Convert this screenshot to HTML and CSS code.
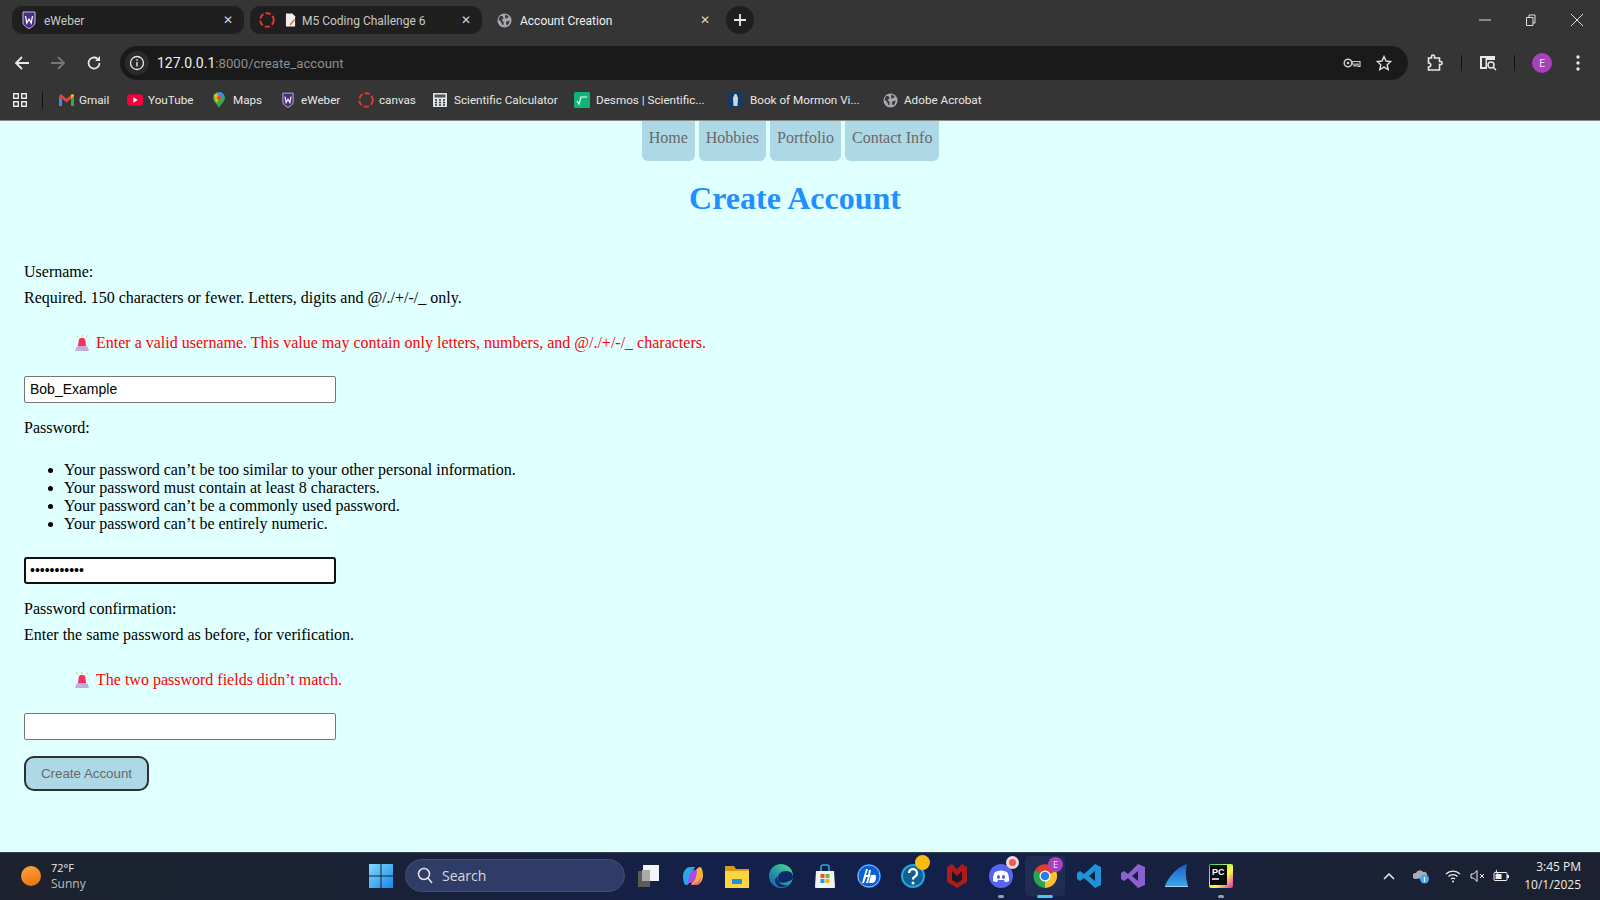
FILE: index.html
```html
<!DOCTYPE html>
<html lang="en">
<head>
<meta charset="utf-8">
<title>Account Creation</title>
<link rel="stylesheet" href="styles.css">
</head>
<body>
<svg class="defs" width="0" height="0" aria-hidden="true">
  <defs>
    <symbol id="weber" viewBox="0 0 14 18"><path d="M1 1h12v10c0 3-2.500 5-6 6.500C3.500 16 1 14 1 11z" fill="#4b2e83" stroke="#c9c2d8" stroke-width="1"/><path d="M3.500 5l1.300 7L7 8l2.200 4 1.300-7" fill="none" stroke="#fff" stroke-width="1.300"/></symbol>
    <symbol id="canvas" viewBox="0 0 16 16"><circle cx="8" cy="8" r="6.800" fill="none" stroke="#e03a30" stroke-width="2" stroke-dasharray="5.300 2.300"/></symbol>
    <symbol id="globe" viewBox="0 0 16 16"><circle cx="8" cy="8" r="7.500" fill="#a5a8ad"/><path d="M3.500 3l2.500.5 1 2-2 2 2 2v3l-1 .5-2-4-2.500-2zM9 1.500l3.500 2-2 2.500-2-1zM10 9l3.500-1-1 3.500-2 2-1-3z" fill="#3a3a3a"/></symbol>
    <symbol id="alarm" viewBox="0 0 16 16"><path d="M8 0v2M2.500 .5l1.500 2.500M13.500 .5L12 3" stroke="#f1c25a" stroke-width="1"/><path d="M3.800 11.500l1-6.500c.3-1.500 1.200-2 3.200-2s2.900.5 3.200 2l1 6.500z" fill="#f4345f"/><path d="M2.500 11.500h11l1.500 4.500H1z" fill="#c0aedf"/></symbol>
  </defs>
</svg>
<div class="screen">
  <header class="chrome">
    <div class="tabstrip">
      <div class="tab tab-first dark"><svg class="ico" width="14" height="18"><use href="#weber"/></svg><span class="tab-title">eWeber</span><span class="x">✕</span></div>
      <div class="tab tab-second dark"><svg class="ico" width="16" height="16"><use href="#canvas"/></svg><svg class="ico doc" width="11" height="14" viewBox="0 0 12 14"><path d="M1 0h7l3 3v11H1z" fill="#eee"/><path d="M5 12l5-6 1 1-5 6z" fill="#e4683a"/></svg><span class="tab-title">M5 Coding Challenge 6</span><span class="x">✕</span></div>
      <div class="tab tab-third"><svg class="ico" width="15" height="15"><use href="#globe"/></svg><span class="tab-title bright">Account Creation</span><span class="x bright">✕</span></div>
      <div class="newtab"><svg width="14" height="14" viewBox="0 0 14 14"><path d="M7 1v12M1 7h12" stroke="#e8e8e8" stroke-width="1.800"/></svg></div>
      <div class="winctl">
        <svg width="14" height="14" viewBox="0 0 14 14"><path d="M1 7h12" stroke="#ddd"/></svg>
        <svg width="14" height="14" viewBox="0 0 14 14"><path d="M2.500 4.500h6.500v8h-6.500zM5 4.500V2h6v8h-2" fill="none" stroke="#ddd"/></svg>
        <svg width="14" height="14" viewBox="0 0 14 14"><path d="M1 1l12 12M13 1L1 13" stroke="#ddd"/></svg>
      </div>
    </div>
    <div class="toolbar">
      <svg class="nav-ico" width="16" height="16" viewBox="0 0 16 16"><path d="M15 8H2M8 2L2 8l6 6" fill="none" stroke="#e8e8e8" stroke-width="1.800"/></svg>
      <svg class="nav-ico" width="16" height="16" viewBox="0 0 16 16"><path d="M1 8h13M8 2l6 6-6 6" fill="none" stroke="#777" stroke-width="1.800"/></svg>
      <svg class="nav-ico" width="16" height="16" viewBox="0 0 16 16"><path d="M13.500 8A5.500 5.500 0 1 1 11.500 3.800" fill="none" stroke="#e8e8e8" stroke-width="1.800"/><path d="M14 1v5H9z" fill="#e8e8e8"/></svg>
      <div class="omnibox">
        <span class="site-info"><svg width="16" height="16" viewBox="0 0 16 16"><circle cx="8" cy="8" r="6.500" fill="none" stroke="#e8e8e8" stroke-width="1.300"/><path d="M8 7v4.500M8 4.300v1.500" stroke="#e8e8e8" stroke-width="1.400"/></svg></span>
        <span class="url"><span class="host">127.0.0.1</span>:8000/create_account</span>
        <svg class="key" width="18" height="12" viewBox="0 0 18 12"><circle cx="5" cy="6" r="3.800" fill="none" stroke="#ccc" stroke-width="1.500"/><circle cx="5" cy="6" r="1.300" fill="#ccc"/><path d="M9 4.500h8v5h-2V7h-2v2h-2V7H9z" fill="none" stroke="#ccc" stroke-width="1.200"/></svg>
        <svg class="star" width="16" height="16" viewBox="0 0 16 16"><path d="M8 1.500l2 4.500 4.800.5-3.600 3.200 1 4.800L8 12.100l-4.200 2.400 1-4.800L1.200 6.500 6 6z" fill="none" stroke="#ddd" stroke-width="1.400"/></svg>
      </div>
      <svg class="ext" width="16" height="18" viewBox="0 0 16 18"><path d="M1.500 4h3V2.500c0-2 3-2 3 0V4h5v3.500h1.500c1.500 0 1.500 3 0 3h-1.500V16h-11v-3c3 0 3-4 0-4z" fill="none" stroke="#e8e8e8" stroke-width="1.600"/></svg>
      <span class="vsep sep-a"></span>
      <svg class="side" width="18" height="18" viewBox="0 0 18 18"><path d="M1 2h15v4H8v9H1z" fill="#e8e8e8"/><rect x="3" y="4" width="3.500" height="9" fill="#353535"/><circle cx="12" cy="11" r="3" fill="none" stroke="#e8e8e8" stroke-width="1.500"/><path d="M14 13l3 3" stroke="#e8e8e8" stroke-width="1.500"/></svg>
      <span class="vsep sep-b"></span>
      <span class="avatar">E</span>
      <svg class="menu" width="4" height="16" viewBox="0 0 4 16"><circle cx="2" cy="2" r="1.700" fill="#e8e8e8"/><circle cx="2" cy="8" r="1.700" fill="#e8e8e8"/><circle cx="2" cy="14" r="1.700" fill="#e8e8e8"/></svg>
    </div>
    <div class="bookmarks">
      <svg class="apps" width="14" height="14" viewBox="0 0 14 14"><path d="M.7.700h4.600v4.600H.7zM8.700.700h4.600v4.600H8.700zM.7 8.700h4.600v4.600H.7zM8.700 8.700h4.600v4.600H8.700z" fill="none" stroke="#e8e8e8" stroke-width="1.400"/></svg>
      <span class="vsep sep-c"></span>
      <a class="bm"><svg width="15" height="12" viewBox="0 0 15 12"><path d="M0 2v10h3V5z" fill="#4285f4"/><path d="M15 2v10h-3V5z" fill="#34a853"/><path d="M0 2l2-2 5.500 5L13 0l2 2-7.500 6.500z" fill="#ea4335"/><path d="M12 5l3-3V1l-2-1-1 1z" fill="#fbbc04"/></svg>Gmail</a>
      <a class="bm"><svg width="16" height="12" viewBox="0 0 15 11"><rect width="15" height="11" rx="3" fill="#f0003c"/><path d="M6 3l4 2.500L6 8z" fill="#fff"/></svg>YouTube</a>
      <a class="bm"><svg width="12" height="16" viewBox="0 0 12 16"><path d="M6 0a6 6 0 0 1 6 6c0 3-4 6-6 10-2-4-6-7-6-10a6 6 0 0 1 6-6z" fill="#34a853"/><path d="M6 0a6 6 0 0 1 5 3L7 7 4 2z" fill="#4285f4"/><path d="M1 3l3-2 3 6-4 4z" fill="#f4b400"/><circle cx="6" cy="6" r="2" fill="#ea4335"/></svg>Maps</a>
      <a class="bm"><svg width="12" height="16"><use href="#weber"/></svg>eWeber</a>
      <a class="bm"><svg width="16" height="16"><use href="#canvas"/></svg>canvas</a>
      <a class="bm"><svg width="16" height="16" viewBox="0 0 16 16"><rect x=".5" y=".5" width="15" height="15" fill="#dfe3e8" stroke="#333"/><rect x="2.500" y="2.500" width="11" height="3" fill="#555"/><path d="M3 8h2M7 8h2M11 8h2M3 10.500h2M7 10.500h2M11 10.500h2M3 13h2M7 13h2M11 13h2" stroke="#333" stroke-width="1.500"/></svg>Scientific Calculator</a>
      <a class="bm"><svg width="16" height="16" viewBox="0 0 16 16"><rect width="16" height="16" rx="1.500" fill="#0fb577"/><path d="M3 9l2 3 2-7h6" fill="none" stroke="#fff" stroke-width="1.200"/></svg>Desmos | Scientific...</a>
      <a class="bm"><svg width="15" height="16" viewBox="0 0 15 16"><rect width="15" height="16" rx="1" fill="#173a63"/><path d="M7.500 2c1 0 1.500.7 1.500 1.500 0 1 1 1 1 3l-.5 7.500h-4L5 6.500c0-2 1-2 1-3C6 2.700 6.500 2 7.500 2z" fill="#c8d6e6"/></svg>Book of Mormon Vi...</a>
      <a class="bm"><svg width="15" height="15"><use href="#globe"/></svg>Adobe Acrobat</a>
    </div>
  </header>

  <main class="page">
    <nav class="topnav">
      <a class="navlink">Home</a>
      <a class="navlink">Hobbies</a>
      <a class="navlink">Portfolio</a>
      <a class="navlink">Contact Info</a>
    </nav>
    <h1 class="title">Create Account</h1>
    <form class="form">
      <div class="line">Username:</div>
      <div class="line help">Required. 150 characters or fewer. Letters, digits and @/./+/-/_ only.</div>
      <div class="error"><svg width="16" height="16"><use href="#alarm"/></svg><span>Enter a valid username. This value may contain only letters, numbers, and @/./+/-/_ characters.</span></div>
      <input class="field field-first" type="text" value="Bob_Example">
      <div class="line label-next">Password:</div>
      <ul class="rules">
        <li>Your password can’t be too similar to your other personal information.</li>
        <li>Your password must contain at least 8 characters.</li>
        <li>Your password can’t be a commonly used password.</li>
        <li>Your password can’t be entirely numeric.</li>
      </ul>
      <input class="field focus" type="password" value="password123">
      <div class="line label-next2">Password confirmation:</div>
      <div class="line help">Enter the same password as before, for verification.</div>
      <div class="error"><svg width="16" height="16"><use href="#alarm"/></svg><span>The two password fields didn’t match.</span></div>
      <input class="field field-last" type="password">
      <button class="submit" type="button">Create Account</button>
    </form>
  </main>

  <footer class="taskbar">
    <div class="weather">
      <span class="sun"></span>
      <div class="weather-text"><div class="temp">72°F</div><div class="cond">Sunny</div></div>
    </div>
    <div class="apps-center">
      <svg class="tb-start" width="24" height="24" viewBox="0 0 24 24"><defs><linearGradient id="win" x1="0" y1="0" x2="1" y2="1"><stop offset="0" stop-color="#7fdcfb"/><stop offset="1" stop-color="#1787e8"/></linearGradient></defs><path d="M0 0h11.500v11.500H0zM12.500 0H24v11.500H12.500zM0 12.500h11.500V24H0zM12.500 12.500H24V24H12.500z" fill="url(#win)"/></svg>
      <div class="searchbox"><svg width="16" height="17" viewBox="0 0 16 17"><circle cx="7" cy="7" r="5.500" fill="none" stroke="#e8e8e8" stroke-width="1.500"/><path d="M11 11l4 5" stroke="#e8e8e8" stroke-width="1.500"/></svg><span>Search</span></div>
      <div class="tb"><svg width="24" height="24" viewBox="0 0 24 24"><rect x="1" y="7" width="12" height="16" fill="#5b5b5b"/><rect x="6" y="1" width="16" height="16" fill="#f4f4f4"/><rect x="5" y="6" width="8" height="11" fill="#aaa"/></svg></div>
      <div class="tb"><svg width="24" height="24" viewBox="0 0 24 24"><path d="M2 12c0-4 3-9 7-9h5c-2 3-3 8-4 12s-3 6-5 6-3-5-3-9z" fill="#2ea4e8"/><path d="M22 12c0 4-3 9-7 9h-5c2-3 3-8 4-12s3-6 5-6 3 5 3 9z" fill="#f8b23c"/><path d="M8 14c1-5 3-8 6-8s2 3 1 7-3 6-6 6-2-2-1-5z" fill="#b04be0"/><path d="M14 19c3 0 5-3 6-6 0 4-2 8-5 8h-4z" fill="#f0568c"/></svg></div>
      <div class="tb"><svg width="24" height="24" viewBox="0 0 24 24"><path d="M0 2h9l2 3h13v19H0z" fill="#d99a12"/><rect y="7" width="24" height="17" fill="#fcd53f"/><rect x="7" y="15" width="10" height="5" rx="1" fill="#1f8fe0"/></svg></div>
      <div class="tb"><svg width="24" height="24" viewBox="0 0 24 24"><defs><linearGradient id="edg" x1="0" y1="1" x2="1" y2="0"><stop offset="0" stop-color="#1159b8"/><stop offset="1" stop-color="#48e08c"/></linearGradient></defs><circle cx="12" cy="12" r="12" fill="url(#edg)"/><path d="M24 13c0-4-3-6-7-6-5 0-8 3-8 7 0 5 4 8 10 7-8 5-13 0-13-5 0 0 1-3 3-4-3 6 5 8 9 6 3-1 6-2 6-5z" fill="#0f2a6a"/><path d="M10 15c0-3 3-5 6-5s5 2 5 3-1 2-3 2h-8z" fill="#0f2a6a"/></svg></div>
      <div class="tb"><svg width="24" height="24" viewBox="0 0 24 24"><path d="M3 7h18l1 16a1 1 0 0 1-1 1H3a1 1 0 0 1-1-1z" fill="#f3f3f3"/><path d="M8 7V3a2 2 0 0 1 2-2h4a2 2 0 0 1 2 2v4" fill="none" stroke="#2aa6e0" stroke-width="1.500"/><rect x="7.500" y="10" width="4" height="4" fill="#e8552c"/><rect x="12.500" y="10" width="4" height="4" fill="#78b62a"/><rect x="7.500" y="15" width="4" height="4" fill="#1d9ce0"/><rect x="12.500" y="15" width="4" height="4" fill="#f7b500"/></svg></div>
      <div class="tb"><svg width="24" height="24" viewBox="0 0 24 24"><circle cx="12" cy="12" r="12" fill="#0a5fd6"/><circle cx="12" cy="12" r="11" fill="none" stroke="#fff" stroke-width=".6"/><path d="M9 5l-4 14h2l2-6h2l-2 6h2l2-7c.3-1 1-1 1-1l-2 8h3c3 0 4-3 4-6s-2-2-3-2h-3l1-5h-2l-1 5h-2l2-6z" fill="#fff"/></svg></div>
      <div class="tb tb-help"><svg width="24" height="24" viewBox="0 0 24 24"><circle cx="12" cy="12" r="12" fill="#24a6d6"/><circle cx="12" cy="12" r="10" fill="#0f5f96"/><path d="M8 9a4 4 0 1 1 6 3.500c-1.500.8-2 1.500-2 3" fill="none" stroke="#fff" stroke-width="2.400"/><circle cx="12" cy="19" r="1.500" fill="#fff"/></svg><span class="dot-yellow"></span></div>
      <div class="tb"><svg width="22" height="24" viewBox="0 0 22 24"><path d="M1 3l5-3 5 5 5-5 5 3v15l-10 6-10-6z" fill="#b01a1a"/><path d="M6 7l5 5 5-5v9l-5 3-5-3z" fill="#14192c"/></svg></div>
      <div class="tb tb-discord"><svg width="24" height="24" viewBox="0 0 24 24"><circle cx="12" cy="12" r="12" fill="#5865f2"/><path d="M6 8c4-2 8-2 12 0 2 3 2 6 2 9-2 1-3 1-4 1l-1-2H9l-1 2c-1 0-2 0-4-1 0-3 0-6 2-9z" fill="#fff"/><ellipse cx="9.500" cy="13" rx="1.600" ry="2" fill="#5865f2"/><ellipse cx="14.500" cy="13" rx="1.600" ry="2" fill="#5865f2"/></svg><span class="dot-red"></span><span class="run"></span></div>
      <div class="tb tb-active"><svg width="24" height="24" viewBox="0 0 24 24"><path d="M12 12L2 6A12 12 0 0 1 23 7z" fill="#e33b2e"/><path d="M12 12l11-5a12 12 0 0 1-11 17z" fill="#fbc02d"/><path d="M12 12v12A12 12 0 0 1 2 6z" fill="#2aa64f"/><circle cx="12" cy="12" r="5.500" fill="#fff"/><circle cx="12" cy="12" r="4.300" fill="#2b7de9"/></svg><span class="dot-profile">E</span><span class="run-active"></span></div>
      <div class="tb"><svg width="24" height="24" viewBox="0 0 24 24"><path d="M18 0l6 3v18l-6 3L7 14l-4 3-3-2V9l3-2 4 3zM18 7l-6 5 6 5z" fill="#1d93d8"/></svg></div>
      <div class="tb"><svg width="24" height="24" viewBox="0 0 24 24"><path d="M17 0l7 3v18l-7 3L7 14l-4 3-3-2V9l3-2 4 3zM17 7l-6 5 6 5z" fill="#8a62d0"/></svg></div>
      <div class="tb"><svg width="24" height="24" viewBox="0 0 24 24"><defs><linearGradient id="fin" x1="0" y1="0" x2="0" y2="1"><stop offset="0" stop-color="#1b5fc0"/><stop offset="1" stop-color="#38a5ee"/></linearGradient></defs><path d="M22 0c-2 8-1 15 1 22H0C4 12 12 3 22 0z" fill="url(#fin)"/><path d="M0 22h23v1H0z" fill="#9fd4f5"/></svg></div>
      <div class="tb tb-pc"><svg width="24" height="24" viewBox="0 0 24 24"><defs><linearGradient id="pcg" x1="0" y1="0" x2="1" y2="1"><stop offset="0" stop-color="#21d789"/><stop offset=".6" stop-color="#fcf84a"/><stop offset="1" stop-color="#d52cc0"/></linearGradient></defs><rect width="24" height="24" rx="2" fill="url(#pcg)"/><rect x="1" y="1" width="17" height="20" fill="#0a0a0a"/><path d="M3 15h7" stroke="#fff" stroke-width="1.500"/></svg><span class="pc-text">PC</span><span class="run"></span></div>
    </div>
    <div class="tray">
      <svg class="t-caret" width="12" height="8" viewBox="0 0 12 8"><path d="M1 7l5-5 5 5" fill="none" stroke="#eee" stroke-width="1.500"/></svg>
      <svg class="t-cloud" width="16" height="16" viewBox="0 0 16 16"><path d="M2 11a3 3 0 0 1 1-6 4 4 0 0 1 7-1 3 3 0 0 1 2 6z" fill="#a8aeb8"/><circle cx="11.500" cy="11" r="4.500" fill="#4aa5e8"/><path d="M11.500 9v5" stroke="#fff" stroke-width="1.300"/></svg>
      <svg class="t-wifi" width="16" height="14" viewBox="0 0 16 14"><path d="M1 5a10 10 0 0 1 14 0M3.500 7.500a6.500 6.500 0 0 1 9 0M6 10a3 3 0 0 1 4 0" fill="none" stroke="#eee" stroke-width="1.200"/><circle cx="8" cy="12.500" r="1" fill="#eee"/></svg>
      <svg class="t-vol" width="15" height="14" viewBox="0 0 15 14"><path d="M1 5h2.500L7 1.500v11L3.500 9H1z" fill="none" stroke="#eee"/><path d="M10 5l4 4M14 5l-4 4" stroke="#eee"/></svg>
      <svg class="t-bat" width="17" height="14" viewBox="0 0 17 14"><rect x="1" y="3.500" width="13" height="8" rx="1" fill="none" stroke="#eee"/><rect x="14" y="6" width="2" height="3" fill="#eee"/><rect x="2.500" y="5" width="6" height="5" fill="#eee"/><path d="M4 0L2 4h2l-1 3 3-4H4z" fill="#eee"/></svg>
      <div class="clock"><div>3:45 PM</div><div>10/1/2025</div></div>
    </div>
  </footer>
</div>
</body>
</html>
```

FILE: styles.css
```css
* { box-sizing: border-box; }
html, body { margin: 0; padding: 0; height: 100%; }
body { overflow: hidden; font-family: "Liberation Serif", serif; }
.defs { position: absolute; }
.screen { width: 1600px; height: 900px; display: flex; flex-direction: column; }

/* browser chrome */
.chrome { height: 121px; background: #353535; border-bottom: 1px solid #8a8a8a; font-family: Roboto, "Open Sans", sans-serif; font-size: 11.700px; color: #e8e8e8; flex: none; }
.tabstrip { height: 46px; display: flex; align-items: flex-start; padding: 6px 0 0 12px; }
.tab { height: 28px; display: flex; align-items: center; padding: 0 11px 0 10px; border-radius: 10px; }
.dark { background: #1f1f1f; }
.tab-first { width: 232px; margin-right: 6px; }
.tab-second { width: 232px; margin-right: 7px; padding-left: 9px; }
.tab-third { width: 232px; padding-left: 8px; margin-right: 5px; }
.ico { flex: none; margin-right: 6px; }
.doc { margin-left: 4px; }
.tab-title { flex: 1; color: #c9c9c9; font-size: 12px; white-space: nowrap; padding-top: 1px; }
.bright { color: #f0f0f0; }
.tab-first .ico { margin-right: 8px; }
.tab-third .ico { margin-right: 8px; }
.x { font-size: 12px; color: #d5d5d5; }
.newtab { width: 28px; height: 28px; border-radius: 50%; background: #1f1f1f; display: flex; align-items: center; justify-content: center; }
.winctl { margin-left: auto; display: flex; gap: 32px; padding: 7px 16px 0 0; }
.winctl svg { display: block; }

.toolbar { height: 34px; display: flex; align-items: center; padding-left: 14px; }
.nav-ico { margin-right: 20px; flex: none; }
.nav-ico:nth-child(3) { margin-right: 18px; }
.omnibox { width: 1288px; height: 34px; background: #1a1a1a; border-radius: 17px; display: flex; align-items: center; padding: 0 16px 0 5px; flex: none; }
.site-info { width: 24px; height: 24px; border-radius: 50%; background: #2b2b2b; display: flex; align-items: center; justify-content: center; margin-right: 8px; }
.url { font-size: 13.200px; color: #8e8e8e; flex: 1; }
.host { color: #f0f0f0; font-size: 14px; }
.key { margin-right: 15px; }
.ext { margin-left: 19px; flex: none; }
.vsep { display: block; width: 1px; height: 16px; background: #111; flex: none; }
.sep-a { margin-left: 18px; }
.side { margin-left: 17px; flex: none; }
.sep-b { margin-left: 17px; }
.avatar { margin-left: 17px; width: 20px; height: 20px; border-radius: 50%; background: #a742bd; color: #f0e0f4; font-size: 10px; display: flex; align-items: center; justify-content: center; flex: none; }
.menu { margin-left: 24px; flex: none; }

.bookmarks { height: 34px; margin-top: 3px; display: flex; align-items: center; padding-left: 13px; white-space: nowrap; }
.apps { flex: none; }
.sep-c { height: 17px; margin-left: 15px; margin-right: 16px; }
.bm { display: flex; align-items: center; gap: 5px; flex: none; color: #e8e8e8; }
.bm:nth-of-type(1) { width: 68px; }
.bm:nth-of-type(2) { width: 86px; }
.bm:nth-of-type(3) { width: 69px; gap: 8px; }
.bm:nth-of-type(4) { width: 76px; gap: 7px; }
.bm:nth-of-type(5) { width: 74px; }
.bm:nth-of-type(6) { width: 142px; gap: 6px; }
.bm:nth-of-type(7) { width: 154px; gap: 6px; }
.bm:nth-of-type(8) { width: 155px; gap: 7px; }
.bm:nth-of-type(9) { gap: 6px; }

/* page */
.page { flex: 1; background: #e0ffff; color: #000; font-size: 16px; min-height: 0; }
.topnav { display: flex; justify-content: center; gap: 4px; padding-right: 19px; }
.navlink { padding: 8px 7px 0; height: 40px; background: lightblue; color: #696969; border-radius: 0 0 6px 6px; line-height: 18px; }
.title { margin: 18px 0 47px; padding: 1px 10px 0 0; height: 37px; text-align: center; font-size: 32px; line-height: 36px; color: dodgerblue; font-weight: bold; }
.form { padding-left: 24px; }
.line { line-height: 18px; }
.help { margin-top: 8px; }
.error { display: flex; align-items: center; gap: 6px; margin: 27px 0 24px 50px; color: red; line-height: 18px; }
.error svg { flex: none; }
.field { display: block; width: 312px; height: 27px; padding: 0 5px 2px; border: 1px solid #767676; border-radius: 2px; background: #fff; font: 14px "Liberation Sans", Arial, sans-serif; color: #000; outline: none; }
.focus { border: 2px solid #101010; border-radius: 3px; padding: 0 4px 2px; }
.label-next { margin-top: 16px; }
.rules { margin: 24px 0; padding-left: 40px; line-height: 18px; }
.label-next2 { margin-top: 16px; }
.submit { display: block; margin-top: 16px; width: 125px; height: 35px; padding: 0; background: lightblue; border: 2px solid #2f2f2f; border-radius: 10px; color: #696969; font: 13.333px "Liberation Sans", Arial, sans-serif; }

/* taskbar */
.taskbar { height: 48px; flex: none; display: flex; align-items: center; padding-bottom: 2px; position: relative; background: linear-gradient(90deg, #1c222e 0%, #1a2233 20%, #14204a 45%, #13204a 62%, #1a2238 80%, #1b2130 100%); border-top: 1px solid #33404e; color: #eee; font-family: "Open Sans", Roboto, sans-serif; }
.weather { width: 369px; flex: none; display: flex; align-items: center; padding-left: 21px; gap: 10px; }
.sun { width: 20px; height: 20px; border-radius: 50%; background: linear-gradient(160deg, #f7a93c, #ef6c0e); flex: none; }
.temp { font-size: 11px; line-height: 16px; }
.cond { font-size: 12px; line-height: 16px; color: #bbb; }
.apps-center { display: flex; align-items: center; }
.tb-start { flex: none; }
.searchbox { margin-left: 12px; width: 220px; height: 33px; border-radius: 17px; background: #303c68; border: 1px solid #43506f; display: flex; align-items: center; padding-left: 11px; gap: 9px; font-size: 14px; color: #d8d8d8; }
.tb { position: relative; width: 44px; height: 44px; display: flex; align-items: center; justify-content: center; flex: none; }
.searchbox + .tb { margin-left: 2px; }
.dot-yellow { position: absolute; width: 15px; height: 15px; right: 5px; top: 1px; border-radius: 50%; background: #fbbc12; }
.dot-red { position: absolute; width: 13px; height: 13px; right: 4px; top: 2px; border-radius: 50%; background: #f05a5a; border: 3px solid #f4d8d8; }
.dot-profile { position: absolute; width: 15px; height: 15px; right: 4px; top: 3px; border-radius: 50%; background: #a742bd; color: #f0e0f4; font-size: 9px; text-align: center; line-height: 15px; }
.run { position: absolute; bottom: 0; left: 19px; width: 6px; height: 3px; border-radius: 2px; background: #9aa0a8; }
.run-active { position: absolute; bottom: 0; left: 14px; width: 16px; height: 3px; border-radius: 2px; background: #4cc2ff; }
.tb-active { padding: 2px; background: #1f2d52; background-clip: content-box; border-radius: 6px; }
.pc-text { position: absolute; left: 13px; top: 13px; font: bold 9px "Liberation Sans", sans-serif; color: #fff; }
.tray { position: absolute; left: 1383px; right: 0; top: 0; bottom: 2px; display: flex; align-items: center; }
.t-caret { margin-right: 18px; }
.t-cloud { margin-right: 16px; }
.t-wifi { margin-right: 9px; }
.t-vol { margin-right: 8px; }
.t-bat { margin-right: 13px; }
.clock { font-size: 12px; line-height: 18px; text-align: right; padding-right: 19px; flex: 1; color: #eee; }
```
